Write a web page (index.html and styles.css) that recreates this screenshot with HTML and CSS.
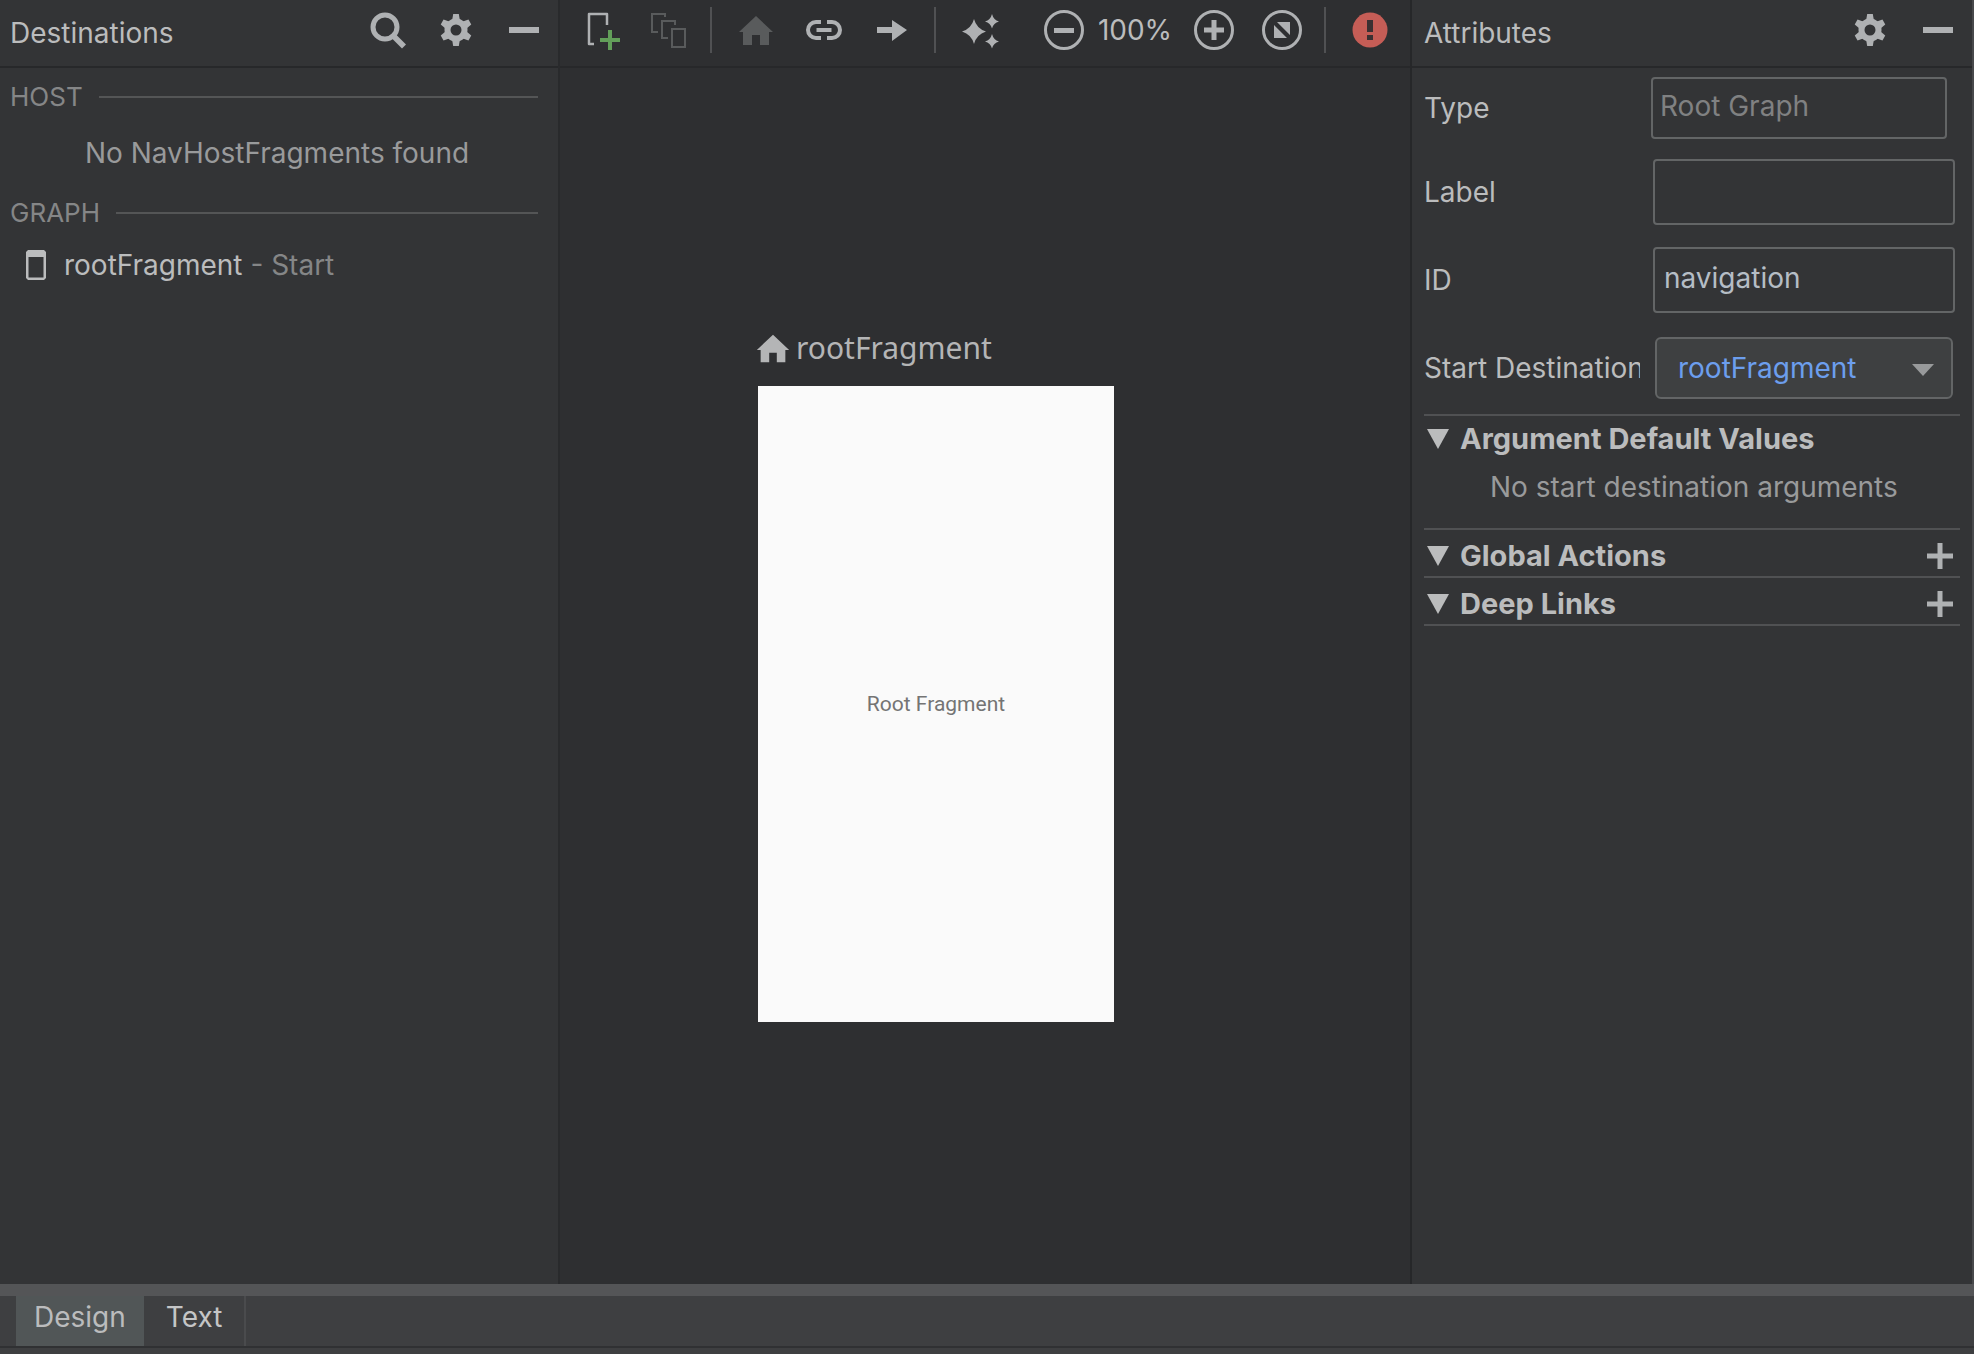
FILE: index.html
```html
<!DOCTYPE html>
<html lang="en">
<head>
    <meta charset="UTF-8">
    <meta name="viewport" content="width=device-width, initial-scale=1.0">
    <title>Navigation Editor</title>
    <link rel="stylesheet" href="styles.css">
</head>
<body>
    <svg class="symbols" aria-hidden="true">
        <symbol id="gear" viewBox="0 0 40 40">
            <path fill-rule="evenodd" d="M20 8.5a11.5 11.5 0 1 0 0 23a11.5 11.5 0 1 0 0-23zM20 14.5a5.5 5.5 0 1 1 0 11a5.5 5.5 0 1 1 0-11z"/>
            <path id="tooth" d="M17.2 4h5.6l1.4 8h-8.4z"/>
            <use href="#tooth" transform="rotate(60 20 20)"/>
            <use href="#tooth" transform="rotate(120 20 20)"/>
            <use href="#tooth" transform="rotate(180 20 20)"/>
            <use href="#tooth" transform="rotate(240 20 20)"/>
            <use href="#tooth" transform="rotate(300 20 20)"/>
        </symbol>
        <symbol id="minus" viewBox="0 0 40 40"><path d="M5 17h30v6H5z"/></symbol>
        <symbol id="home" viewBox="0 0 40 40"><path d="M20 6l17 16h-4v13h-9V25h-8v10H7V22H3z"/></symbol>
        <symbol id="plus" viewBox="0 0 26 26"><path d="M10.500 0h5v10.500H26v5H15.500V26h-5V15.500H0v-5h10.500z"/></symbol>
    </svg>

    <main class="editor">
        <aside class="panel destinations">
            <header class="panel-header">
                <h2>Destinations</h2>
                <div class="actions">
                    <button aria-label="Search"><svg viewBox="0 0 40 40"><circle cx="17" cy="17" r="12" fill="none" stroke="currentColor" stroke-width="5"/><path d="M25.500 22l12.500 12.500-4 4L21.500 26z"/></svg></button>
                    <button aria-label="Settings"><svg><use href="#gear"/></svg></button>
                    <button aria-label="Hide"><svg><use href="#minus"/></svg></button>
                </div>
            </header>
            <h3 class="group-title">HOST</h3>
            <p class="empty-host">No NavHostFragments found</p>
            <h3 class="group-title">GRAPH</h3>
            <ul class="graph-list">
                <li>
                    <svg class="screen-icon" viewBox="0 0 20 30"><path fill-rule="evenodd" d="M2 0h16l2 2v26l-2 2H2l-2-2V2zM2.500 7v20.500h15V7z"/></svg>
                    <span>rootFragment <span class="muted">- Start</span></span>
                </li>
            </ul>
        </aside>

        <section class="design">
            <div class="toolbar">
                <div class="tool-group">
                    <button aria-label="New destination"><svg viewBox="0 0 40 40"><path d="M14 34H9V4h18v11" fill="none" stroke="currentColor" stroke-width="2.500" stroke-linejoin="round"/><path class="green" d="M28 20h4v8h8v4h-8v8h-4v-8h-8v-4h8z"/></svg></button>
                    <button aria-label="Nested graph" disabled><svg viewBox="0 0 40 40"><g fill="none" stroke="currentColor" stroke-width="2"><path d="M10 22H4V4h13v3M20 28h-6V11h13v4"/><path d="M24 19h13v18H24z"/></g></svg></button>
                </div>
                <span class="separator"></span>
                <div class="tool-group">
                    <button aria-label="Assign start destination" disabled><svg><use href="#home"/></svg></button>
                    <button aria-label="Add deep link"><svg viewBox="0 0 40 40"><path d="M17 12h-5a8 8 0 0 0 0 16h5M23 12h5a8 8 0 0 1 0 16h-5" fill="none" stroke="currentColor" stroke-width="4"/><path d="M12.500 18h15v4h-15z"/></svg></button>
                    <button aria-label="Add action"><svg viewBox="0 0 40 40"><path d="M5 17h15v-7l15 10-15 11v-8H5z"/></svg></button>
                </div>
                <span class="separator"></span>
                <div class="tool-group">
                    <button aria-label="Auto arrange"><svg viewBox="0 0 40 40"><path d="M14 9q2.500 9.500 12 12.500q-9.500 3-12 12.500q-2.500-9.500-12-12.500q9.500-3 12-12.500zM32 4q1.500 6 7 7.500q-5.500 1.500-7 7q-1.500-5.500-7-7q5.500-1.500 7-7.500zM32 24q1.500 6 7 7.500q-5.500 1.500-7 7q-1.500-5.500-7-7q5.500-1.500 7-7.500z"/></svg></button>
                </div>
                <div class="zoom">
                    <button aria-label="Zoom out"><svg viewBox="0 0 40 40"><circle cx="20" cy="20" r="18.500" fill="none" stroke="currentColor" stroke-width="3"/><path d="M10 18h20v5H10z"/></svg></button>
                    <span class="zoom-value">100%</span>
                    <button aria-label="Zoom in"><svg viewBox="0 0 40 40"><circle cx="20" cy="20" r="18.500" fill="none" stroke="currentColor" stroke-width="3"/><path d="M17.500 10h5v7.500H30v5h-7.500V30h-5v-7.500H10v-5h7.500z"/></svg></button>
                </div>
                <div class="tool-group zoom-fit">
                    <button aria-label="Zoom to fit"><svg viewBox="0 0 40 40"><circle cx="20" cy="20" r="18.500" fill="none" stroke="currentColor" stroke-width="3"/><path d="M15 12h13v13zM12 15l13 13H12z"/></svg></button>
                </div>
                <span class="separator"></span>
                <div class="tool-group">
                    <button aria-label="Errors"><svg viewBox="0 0 40 40"><circle class="red" cx="20" cy="20" r="17.500"/><path class="mark" d="M17 10h6v12h-6zM17 25h6v5h-6z"/></svg></button>
                </div>
            </div>
            <div class="canvas">
                <figure class="fragment">
                    <figcaption><svg><use href="#home"/></svg>rootFragment</figcaption>
                    <div class="preview">Root Fragment</div>
                </figure>
            </div>
        </section>

        <aside class="panel attributes">
            <header class="panel-header">
                <h2>Attributes</h2>
                <div class="actions">
                    <button aria-label="Settings"><svg><use href="#gear"/></svg></button>
                    <button aria-label="Hide"><svg><use href="#minus"/></svg></button>
                </div>
            </header>
            <form class="fields">
                <div class="field field-type">
                    <label for="type">Type</label>
                    <input type="text" id="type" value="Root Graph" disabled>
                </div>
                <div class="field">
                    <label for="label">Label</label>
                    <input type="text" id="label">
                </div>
                <div class="field">
                    <label for="navId">ID</label>
                    <input type="text" id="navId" value="navigation">
                </div>
                <div class="field field-start">
                    <label for="start">Start Destination</label>
                    <div class="select-box">
                        <select id="start">
                            <option>rootFragment</option>
                        </select>
                        <svg viewBox="0 0 22 12"><path d="M0 0h22L11 12z"/></svg>
                    </div>
                </div>
            </form>
            <section class="section">
                <h3><svg viewBox="0 0 24 20"><path d="M1 0h22L12 20z"/></svg>Argument Default Values</h3>
                <p>No start destination arguments</p>
            </section>
            <section class="section with-add">
                <h3><svg viewBox="0 0 24 20"><path d="M1 0h22L12 20z"/></svg>Global Actions</h3>
                <button aria-label="Add global action"><svg><use href="#plus"/></svg></button>
            </section>
            <section class="section with-add">
                <h3><svg viewBox="0 0 24 20"><path d="M1 0h22L12 20z"/></svg>Deep Links</h3>
                <button aria-label="Add deep link"><svg><use href="#plus"/></svg></button>
            </section>
        </aside>
    </main>

    <nav class="tabs">
        <button class="tab active">Design</button>
        <button class="tab">Text</button>
    </nav>
</body>
</html>
```
FILE: styles.css
```css
* {
    box-sizing: border-box;
}
body {
    margin: 0;
    min-height: 100vh;
    display: flex;
    flex-direction: column;
    background: #3e3f41;
    color: #bbbcbd;
    font-family: Inter, "Liberation Sans", sans-serif;
    font-size: 28px;
    line-height: 32px;
}
h2, h3, p, ul, figure {
    margin: 0;
    padding: 0;
    font-size: inherit;
    font-weight: normal;
}
button {
    display: block;
    padding: 0;
    border: none;
    background: none;
    color: #afb1b3;
    font: inherit;
    cursor: pointer;
}
button:disabled {
    color: #595b5c;
    cursor: default;
}
svg {
    display: block;
    width: 40px;
    height: 40px;
    fill: currentColor;
}
.symbols {
    position: absolute;
    width: 0;
    height: 0;
}
.editor {
    flex: 1;
    display: flex;
}

/* side panels */
.panel {
    min-width: 0;
    background: #333436;
}
.destinations {
    flex: 0 0 560px;
    border-right: 2px solid #292a2c;
}
.attributes {
    flex: 0 0 564px;
    border-left: 2px solid #262729;
    border-right: 2px solid #48494b;
}
.panel-header {
    display: flex;
    align-items: center;
    justify-content: space-between;
    height: 68px;
    padding: 0 14px 0 10px;
    border-bottom: 2px solid #27282a;
}
.attributes .panel-header {
    padding-left: 12px;
}
.actions {
    display: flex;
    gap: 28px;
    padding-bottom: 6px;
}
.group-title {
    display: flex;
    align-items: center;
    gap: 16px;
    padding: 0 20px 0 10px;
    margin-top: 13px;
    color: #858687;
    font-size: 26px;
}
.group-title::after {
    content: "";
    flex: 1;
    height: 2px;
    background: #545556;
}
.empty-host {
    margin: 24px 0 28px;
    padding-right: 4px;
    text-align: center;
    color: #999a9b;
}
.graph-list {
    list-style: none;
    margin-top: 20px;
}
.graph-list li {
    display: flex;
    align-items: center;
    gap: 18px;
    padding-left: 26px;
}
.screen-icon {
    width: 20px;
    height: 30px;
}
.muted {
    color: #858687;
}

/* design surface */
.design {
    flex: 1;
    display: flex;
    flex-direction: column;
    background: #2e2f31;
}
.toolbar {
    display: flex;
    align-items: center;
    height: 68px;
    padding: 0 16px 6px 20px;
    border-bottom: 2px solid #27282a;
}
.tool-group {
    display: flex;
    gap: 28px;
}
.separator {
    width: 2px;
    height: 46px;
    margin: 0 24px 0 22px;
    background: #505153;
}
.zoom {
    display: flex;
    align-items: center;
    margin-left: 44px;
}
.zoom-value {
    width: 110px;
    padding-right: 8px;
    text-align: center;
}
.zoom-fit {
    margin-left: 28px;
}
.green {
    fill: #629f59;
}
.red {
    fill: #c55d56;
}
.mark {
    fill: #3a3032;
}
.canvas {
    padding: 260px 0 0 198px;
}
.fragment figcaption {
    display: flex;
    align-items: center;
    gap: 4px;
    height: 40px;
    color: #b4b5b6;
    font-family: "Noto Sans", sans-serif;
    font-size: 30px;
}
.fragment figcaption svg {
    width: 38px;
    height: 38px;
    margin-left: -4px;
}
.preview {
    display: flex;
    align-items: center;
    justify-content: center;
    width: 356px;
    height: 636px;
    margin-top: 18px;
    background: #fafafa;
    color: #747474;
    font-family: Roboto, sans-serif;
    font-size: 21px;
}

/* attribute fields */
.fields {
    padding: 9px 17px 15px 12px;
}
.field {
    display: flex;
    align-items: center;
    margin-bottom: 22px;
}
.field label {
    width: 216px;
    margin-right: 13px;
    overflow: hidden;
    white-space: nowrap;
}
.field input {
    flex: 1;
    min-width: 0;
    height: 66px;
    padding: 0 9px 4px;
    border: 2px solid #636566;
    border-radius: 4px;
    background: none;
    color: #b5bdc5;
    font: inherit;
}
.field-type {
    margin-bottom: 20px;
    padding-right: 8px;
}
.field-type label {
    margin-right: 11px;
}
.field-type input {
    height: 62px;
    padding: 0 7px 4px;
}
.field-type input:disabled {
    color: #808182;
}
.field-start {
    margin: 24px 0 0;
    padding-right: 2px;
}
.select-box {
    position: relative;
    flex: 1;
    margin-left: 2px;
}
.select-box select {
    display: block;
    width: 100%;
    height: 62px;
    padding: 0 21px;
    border: 2px solid #636566;
    border-radius: 6px;
    background: #3e4041;
    color: #6c9eed;
    font: inherit;
    appearance: none;
}
.select-box svg {
    position: absolute;
    top: 27px;
    right: 19px;
    width: 22px;
    height: 12px;
    color: #989a9b;
    pointer-events: none;
}
.section {
    display: flex;
    flex-wrap: wrap;
    align-items: center;
    justify-content: space-between;
    margin: 0 12px;
    padding: 7px 7px 7px 2px;
    border-top: 2px solid #505153;
}
.section:last-child {
    border-bottom: 2px solid #505153;
}
.with-add {
    padding: 10px 7px 4px 2px;
}
.section h3 {
    display: flex;
    align-items: center;
    gap: 10px;
    font-size: 29px;
    font-weight: bold;
}
.section h3 svg {
    width: 24px;
    height: 20px;
}
.section p {
    width: 100%;
    margin: 16px 0 18px;
    padding-left: 64px;
    color: #999a9b;
}
.section button svg {
    width: 26px;
    height: 26px;
}

/* editor tabs */
.tabs {
    display: flex;
    height: 64px;
    margin-bottom: 6px;
    padding-left: 16px;
    border-top: 12px solid #545557;
    border-bottom: 2px solid #303133;
}
.tab {
    padding: 0 22px 8px;
    border-right: 2px solid #4a4b4d;
    color: #c4c5c6;
}
.tab.active {
    padding: 0 18px 8px;
    border-right: none;
    background: #515657;
    color: #bbbcbd;
}
```
